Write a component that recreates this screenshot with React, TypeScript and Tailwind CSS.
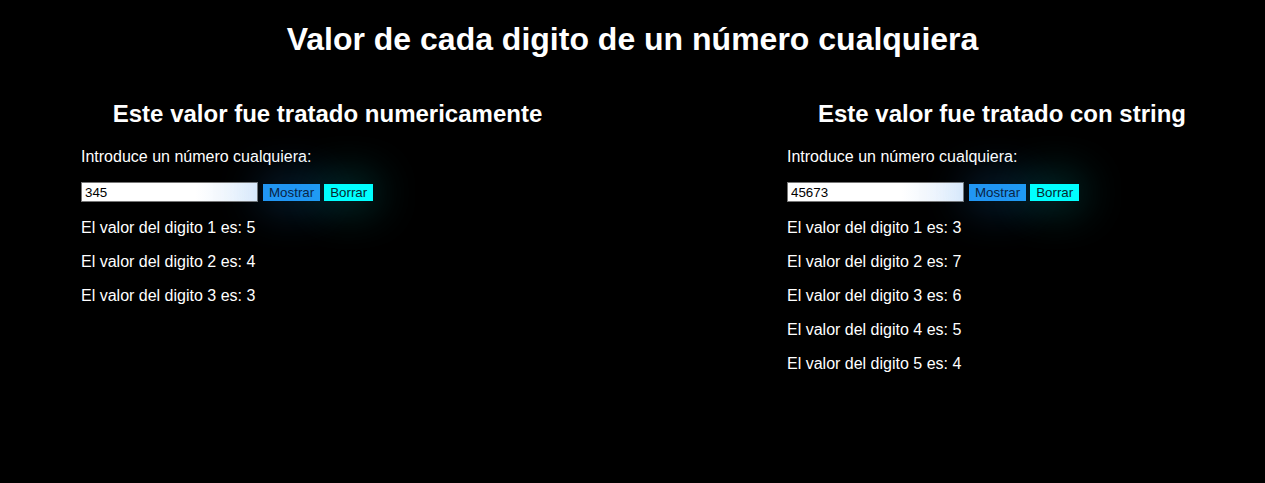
import React from "react";

function Column({ title, value, digits, width }: { title: string; value: string; digits: string[]; width: string }) {
  return (
    <div className={`${width} shrink-0`}>
      <h2 className="text-center text-[24px] font-bold leading-[28px] mt-[42px] mb-[20px]">{title}</h2>
      <p className="text-[16px] leading-[18px] mb-[16px]">Introduce un número cualquiera:</p>
      <div className="flex items-center h-[20px] mb-[17px]">
        <input
          readOnly
          value={value}
          className="w-[177px] h-[20px] border border-[#767676] bg-[linear-gradient(to_right,#ffffff_65%,#e2eefc)] text-black text-[13.33px] px-[3px] outline-none"
          style={{ fontFamily: '"Liberation Sans", Arial, sans-serif' }}
        />
        <button className="ml-[5px] h-[17px] px-[6px] bg-[#2196f3] text-[#0a1f44] text-[13.33px] leading-[17px] shadow-[0_0_45px_rgba(33,150,243,0.5)]">
          Mostrar
        </button>
        <button className="ml-[4px] h-[17px] px-[6px] bg-[#00ffff] text-[#062a30] text-[13.33px] leading-[17px] shadow-[0_0_45px_rgba(0,255,255,0.45)]">
          Borrar
        </button>
      </div>
      {digits.map((d, i) => (
        <p key={i} className="text-[16px] leading-[18px] mb-[16px]">
          El valor del digito {i + 1} es: {d}
        </p>
      ))}
    </div>
  );
}

export default function App() {
  return (
    <div
      className="min-h-[483px] bg-black text-white"
      style={{ fontFamily: '"Liberation Sans", Arial, sans-serif' }}
    >
      <h1 className="text-center text-[32px] font-bold leading-[37px] pt-[21px]">
        Valor de cada digito de un número cualquiera
      </h1>
      <div className="flex pl-[81px] gap-[213px]">
        <Column title="Este valor fue tratado numericamente" value="345" digits={["5", "4", "3"]} width="w-[493px]" />
        <Column title="Este valor fue tratado con string" value="45673" digits={["3", "7", "6", "5", "4"]} width="w-[430px]" />
      </div>
    </div>
  );
}
